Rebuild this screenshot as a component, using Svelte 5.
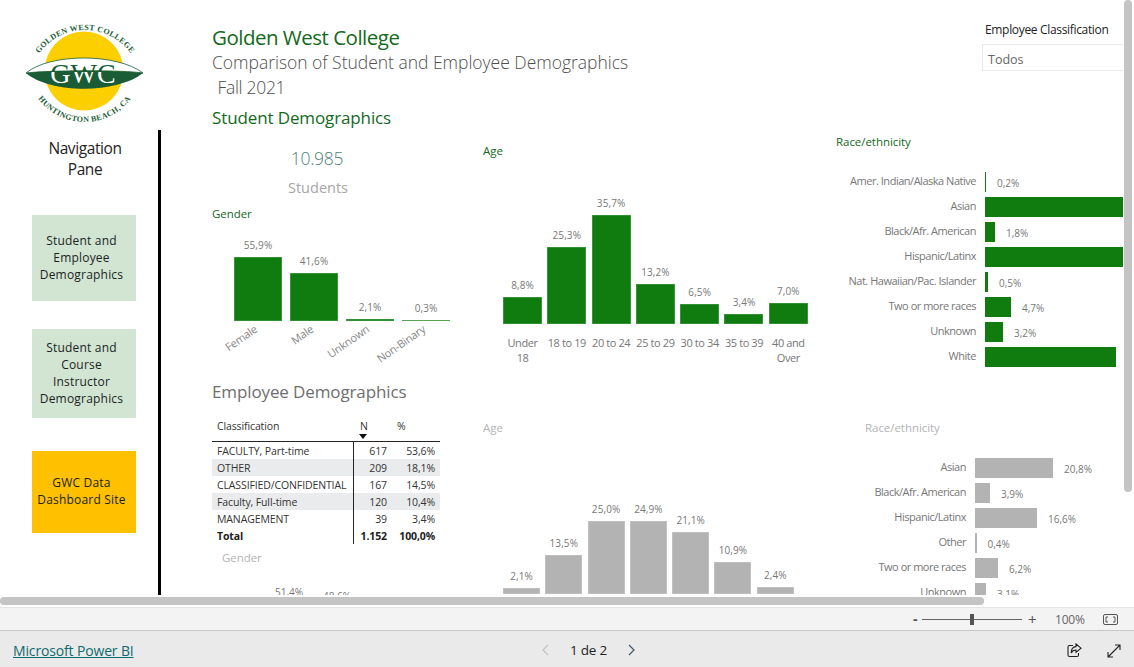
<script>
  const genderS = [
    { l: 'Female', v: 55.9 }, { l: 'Male', v: 41.6 }, { l: 'Unknown', v: 2.1 }, { l: 'Non-Binary', v: 0.3 }
  ];
  const ageS = [
    { l: 'Under 18', v: 8.8 }, { l: '18 to 19', v: 25.3 }, { l: '20 to 24', v: 35.7 }, { l: '25 to 29', v: 13.2 },
    { l: '30 to 34', v: 6.5 }, { l: '35 to 39', v: 3.4 }, { l: '40 and Over', v: 7.0 }
  ];
  const ageE = [2.1, 13.5, 25.0, 24.9, 21.1, 10.9, 2.4];
  const raceS = [
    { l: 'Amer. Indian/Alaska Native', v: 0.2, w: 1 }, { l: 'Asian', v: 26, w: 140, hide: true },
    { l: 'Black/Afr. American', v: 1.8, w: 10 }, { l: 'Hispanic/Latinx', v: 26, w: 140, hide: true },
    { l: 'Nat. Hawaiian/Pac. Islander', v: 0.5, w: 3 }, { l: 'Two or more races', v: 4.7, w: 26 },
    { l: 'Unknown', v: 3.2, w: 18 }, { l: 'White', v: 23.6, w: 131, hide: true }
  ];
  const raceE = [
    { l: 'Asian', v: 20.8, w: 78 }, { l: 'Black/Afr. American', v: 3.9, w: 15 }, { l: 'Hispanic/Latinx', v: 16.6, w: 62 },
    { l: 'Other', v: 0.4, w: 1.5 }, { l: 'Two or more races', v: 6.2, w: 23 }, { l: 'Unknown', v: 3.1, w: 11 }
  ];
  const rows = [
    ['FACULTY, Part-time', '617', '53,6%'], ['OTHER', '209', '18,1%'], ['CLASSIFIED/CONFIDENTIAL', '167', '14,5%'],
    ['Faculty, Full-time', '120', '10,4%'], ['MANAGEMENT', '39', '3,4%']
  ];
  const fmt = (v) => v.toFixed(1).replace('.', ',') + '%';
  const px = (v, s) => Math.max(1, v * s) + 'px';
</script>

<div class="page">
  <div class="viewport">
    <div class="canvas">
      <aside class="nav">
        <div class="logo">
          <svg width="120" height="106" viewBox="0 0 120 106" aria-label="Golden West College logo">
            <defs>
              <linearGradient id="gwcFill" gradientUnits="userSpaceOnUse" x1="0" y1="43" x2="0" y2="63">
                <stop offset="0.45" stop-color="#1a5c35" />
                <stop offset="0.45" stop-color="#ffffff" />
              </linearGradient>
              <path id="arcTop" d="M13 35 A56.7 56.7 0 0 1 107 35" />
              <path id="arcBottom" d="M12 77 A57.6 57.6 0 0 0 107 77" />
            </defs>
            <circle cx="59" cy="51" r="39.5" fill="#fccf00" />
            <text class="arc"><textPath href="#arcTop" startOffset="50%" text-anchor="middle">GOLDEN WEST COLLEGE</textPath></text>
            <text class="arc"><textPath href="#arcBottom" startOffset="50%" text-anchor="middle">HUNTINGTON BEACH, CA</textPath></text>
            <path d="M1 53 C25 33 92 33 118 53 C100 50 25 50 1 53 Z" fill="#fff" stroke="#1a5c35" stroke-width="0.8" />
            <path d="M1 53 C22 50 97 50 118 53 C92 74 25 74 1 53 Z" fill="#1a5c35" />
            <text class="gwc" x="58" y="63" text-anchor="middle" fill="url(#gwcFill)">GWC</text>
          </svg>
        </div>
        <div class="nav-body">
          <div class="pane">Navigation<br />Pane</div>
          <div class="btn b1">Student and<br />Employee<br />Demographics</div>
          <div class="btn b2">Student and<br />Course<br />Instructor<br />Demographics</div>
          <div class="btn b3">GWC Data<br />Dashboard Site</div>
        </div>
      </aside>

      <main class="main">
        <header class="head">
          <div>
            <h1>Golden West College</h1>
            <p class="sub">Comparison of Student and Employee Demographics</p>
            <p class="sub term">Fall 2021</p>
          </div>
          <div class="slicer">
            <div class="slicer-label">Employee Classification</div>
            <div class="slicer-box">Todos</div>
          </div>
        </header>
        <h2 class="green">Student Demographics</h2>

        <div class="row r1">
          <section class="col">
            <div class="kpi">10.985</div>
            <div class="kpi-label">Students</div>
            <div class="title green gender-s">Gender</div>
            <div class="bars gender-bars">
              {#each genderS as d}
                <div class="bar-col gw">
                  <span class="val">{fmt(d.v)}</span>
                  <div class="bar" style:height={px(d.v, 1.145)}></div>
                </div>
              {/each}
            </div>
            <div class="ticks">
              {#each genderS as d}
                <div class="tick"><span>{d.l}</span></div>
              {/each}
            </div>
          </section>

          <section class="col">
            <div class="title green age-t">Age</div>
            <div class="bars age-bars">
              {#each ageS as d}
                <div class="bar-col aw">
                  <span class="val">{fmt(d.v)}</span>
                  <div class="bar" style:height={px(d.v, 3.05)}></div>
                </div>
              {/each}
            </div>
            <div class="age-labels">
              {#each ageS as d}<div>{d.l}</div>{/each}
            </div>
          </section>

          <section class="col">
            <div class="title green race-t">Race/ethnicity</div>
            <div class="hbars">
              {#each raceS as d}
                <div class="hrow">
                  <span class="hlabel">{d.l}</span>
                  <div class="hbar" style:width={d.w + 'px'}></div>
                  {#if !d.hide}<span class="hval">{fmt(d.v)}</span>{/if}
                </div>
              {/each}
            </div>
          </section>
        </div>

        <div class="row r2">
          <section class="col">
            <h2 class="grey">Employee Demographics</h2>
            <table>
              <thead>
                <tr>
                  <th>Classification</th>
                  <th class="n">N<i class="sort"></i></th>
                  <th class="p">%</th>
                </tr>
              </thead>
              <tbody>
                {#each rows as r, i}
                  <tr class:band={i % 2 === 1}><td>{r[0]}</td><td class="num sep">{r[1]}</td><td class="num">{r[2]}</td></tr>
                {/each}
                <tr class="total"><td>Total</td><td class="num sep">1.152</td><td class="num">100,0%</td></tr>
              </tbody>
            </table>
            <div class="title muted gender-e">Gender</div>
            <div class="gender-vals"><span>51,4%</span><span class="lower">48,6%</span></div>
          </section>

          <section class="col">
            <div class="title muted age-te">Age</div>
            <div class="bars age-bars-e">
              {#each ageE as v}
                <div class="bar-col ew">
                  <span class="val">{fmt(v)}</span>
                  <div class="bar grey-bar" style:height={px(v, 2.92)}></div>
                </div>
              {/each}
            </div>
          </section>

          <section class="col">
            <div class="title muted race-te">Race/ethnicity</div>
            <div class="hbars narrow">
              {#each raceE as d}
                <div class="hrow">
                  <span class="hlabel">{d.l}</span>
                  <div class="hbar grey-bar" style:width={d.w + 'px'}></div>
                  <span class="hval">{fmt(d.v)}</span>
                </div>
              {/each}
            </div>
          </section>
        </div>
      </main>
    </div>
    <div class="vscroll"></div>
  </div>

  <div class="hscroll-track"><div class="hscroll"></div></div>

  <div class="zoombar">
    <span class="minus">-</span>
    <div class="slider"><i></i></div>
    <span class="plus">+</span>
    <span class="pct">100%</span>
    <svg class="fit" width="15" height="11" viewBox="0 0 15 11" fill="none" stroke="#555" aria-label="Fit to page">
      <rect x="0.5" y="0.5" width="14" height="10" rx="1.5" />
      <path d="M5 3H3V8H5M10 3H12V8H10" stroke-width="1" />
    </svg>
  </div>

  <footer class="foot">
    <a class="brand" href="#top">Microsoft Power BI</a>
    <div class="pager">
      <svg width="9" height="12" viewBox="0 0 9 12" fill="none" stroke="#c4c4c4" stroke-width="1.2"><path d="M7 1L2 6L7 11" /></svg>
      <span>1 de 2</span>
      <svg width="9" height="12" viewBox="0 0 9 12" fill="none" stroke="#44546a" stroke-width="1.2"><path d="M2 1L7 6L2 11" /></svg>
    </div>
    <div class="foot-icons">
      <svg width="15" height="15" viewBox="0 0 15 15" fill="none" stroke="#222" stroke-width="1.1" aria-label="Share">
        <path d="M6 2.5H2.5A1.5 1.5 0 0 0 1 4V12A1.5 1.5 0 0 0 2.5 13.5H10A1.5 1.5 0 0 0 11.5 12V10" />
        <path d="M9 1L14 5.2L9 9.4V7C6.8 7 5.2 8 4.2 10C4.2 6.5 6 3.8 9 3.6Z" />
      </svg>
      <svg width="14" height="14" viewBox="0 0 14 14" fill="none" stroke="#222" stroke-width="1.1" aria-label="Full screen">
        <path d="M1 13L13 1M8 1H13V6M1 8V13H6" />
      </svg>
    </div>
  </footer>
</div>

<style>
  :global(body) { margin: 0; background: #fff; }
  .page {
    width: 1134px; height: 667px; overflow: hidden; display: flex; flex-direction: column;
    font-family: "Open Sans", "Noto Sans", sans-serif; font-size: 11px; color: #333;
  }
  .viewport { position: relative; height: 595px; overflow: hidden; background: #fff; }
  .canvas { display: flex; height: 595px; }
  h1, h2, p { margin: 0; font-weight: 400; }

  .nav { width: 161px; flex: none; display: flex; flex-direction: column; }
  .logo { height: 130px; box-sizing: border-box; padding: 20px 0 0 25px; }
  .arc { font-family: "Liberation Serif", serif; font-size: 8px; font-weight: 700; fill: #1a5c35; letter-spacing: 0.3px; }
  .gwc { font-family: "Liberation Serif", serif; font-size: 28px; font-weight: 400; stroke: none; }
  .nav-body {
    flex: 1; box-sizing: border-box; border-right: 3px solid #000; padding: 8px 0 0 32px;
    display: flex; flex-direction: column;
  }
  .pane { width: 106px; text-align: center; font-size: 15.5px; line-height: 21px; color: #252423; letter-spacing: -0.4px; }
  .btn {
    width: 104px; box-sizing: border-box; padding: 0 5px 2px 0; display: flex; align-items: center; justify-content: center; text-align: center;
    font-size: 12px; line-height: 17px; color: #201f1e; letter-spacing: 0.2px; white-space: nowrap;
  }
  .b1 { height: 86px; margin-top: 35px; background: #d2e5d3; }
  .b2 { height: 89px; margin-top: 28px; background: #d2e5d3; }
  .b3 { height: 82px; margin-top: 33px; background: #ffc000; }

  .main { flex: 1; box-sizing: border-box; padding: 24px 11px 0 51px; display: flex; flex-direction: column; min-width: 0; }
  .head { display: flex; justify-content: space-between; height: 82px; }
  h1 { font-size: 20.5px; line-height: 26px; color: #14691c; letter-spacing: -0.5px; }
  .sub { font-size: 17.5px; font-weight: 300; line-height: 25px; color: #4f4f4f; letter-spacing: -0.02px; }
  .term { padding-left: 5.5px; letter-spacing: -0.3px; }
  .slicer { width: 141px; }
  .slicer-label { padding-left: 3px; font-size: 12px; line-height: 12px; color: #222; letter-spacing: -0.33px; }
  .slicer-box {
    margin-top: 8px; height: 27px; box-sizing: border-box; border: 1px solid #eaeaea; border-right: 0;
    padding-left: 5px; font-size: 12.5px; line-height: 29px; color: #666;
  }
  h2 { font-size: 17px; line-height: 24px; letter-spacing: -0.12px; }
  .green { color: #14691c; }
  .grey { color: #6e6e6e; }

  .row { display: grid; grid-template-columns: 271px 353px 287px; }
  .r1 { height: 250px; }
  .r2 { height: 215px; }
  .col { min-width: 0; position: relative; }
  .title { font-size: 11.5px; line-height: 16px; letter-spacing: -0.05px; }
  .muted { color: #b3b3b3; }

  .kpi { width: 210px; margin-top: 18px; text-align: center; font-size: 17.5px; font-weight: 300; line-height: 20px; color: #4f7f78; letter-spacing: -0.3px; }
  .kpi-label { width: 212px; margin-top: 10px; text-align: center; font-size: 14.5px; line-height: 20px; color: #a6a6a6; }
  .gender-s { margin-top: 8px; }

  .bars { display: flex; align-items: flex-end; }
  .bar-col { display: flex; flex-direction: column; align-items: center; flex: none; }
  .val { font-size: 10px; line-height: 14px; margin-bottom: 5px; color: #777; white-space: nowrap; letter-spacing: 0.1px; }
  .bar { width: 100%; background: #107c10; box-sizing: border-box; box-shadow: inset 0 0 0 0.6px rgba(255,255,255,.3); }

  .gender-bars { height: 99px; margin-left: 22px; gap: 8px; }
  .gw { width: 48px; }
  .ticks { display: flex; gap: 8px; margin-left: 16px; margin-top: 1px; }
  .tick { width: 24px; padding-right: 24px; display: flex; justify-content: flex-end; }
  .tick span { white-space: nowrap; font-size: 11px; line-height: 14px; color: #888; transform: rotate(-35deg); transform-origin: 100% 0; letter-spacing: -0.2px; }

  .age-t { margin-top: 13px; }
  .age-bars { height: 165px; margin-left: 20px; gap: 5.3px; }
  .aw { width: 39px; }
  .age-labels { display: flex; margin: 11px 0 0 17.4px; }
  .age-labels div { width: 44.3px; text-align: center; font-size: 11px; line-height: 15px; color: #777; letter-spacing: -0.4px; }

  .race-t { margin-top: 4px; }
  .hbars { margin-top: 22px; display: flex; flex-direction: column; gap: 5px; overflow: hidden; }
  .hrow { display: flex; align-items: center; height: 20px; }
  .hlabel { flex: none; width: 140px; margin-right: 9px; text-align: right; font-size: 11px; line-height: 18px; color: #777; white-space: nowrap; letter-spacing: -0.48px; transform: translateY(-1px); }
  .hbar { height: 20px; flex: none; background: #107c10; }
  .hval { margin-left: 11px; font-size: 10px; line-height: 14px; color: #777; transform: translateY(1px); white-space: nowrap; }
  .narrow .hlabel { width: 130px; }
  .race-te { margin: 40px 0 0 29px; }
  .bar.grey-bar, .hbar.grey-bar { background: #b3b3b3; }

  h2.grey { margin: 0; }
  table { margin-top: 13px; width: 228px; border-collapse: collapse; table-layout: fixed; font-size: 10.5px; color: #333; letter-spacing: -0.12px; }
  th { height: 24px; box-sizing: border-box; padding: 2px 0 0 5px; font-weight: 400; text-align: left; vertical-align: top; line-height: 14px; border-bottom: 1px solid #252423; }
  th:first-child { width: 141px; }
  th.n { width: 39px; padding-left: 7px; position: relative; }
  th.p { padding-left: 5px; }
  .sort { position: absolute; left: 6px; top: 17px; border: 4px solid transparent; border-top: 5px solid #111; border-bottom: 0; }
  td { height: 17px; box-sizing: border-box; padding: 1px 0 0 5px; line-height: 16px; white-space: nowrap; }
  .band td { background: #eaebed; }
  .num { text-align: right; padding: 1px 5px 0 0; }
  .sep { border-left: 1px solid #252423; }
  .total td { font-weight: 700; color: #222; }
  .gender-e { margin: 6px 0 0 10px; }
  .gender-vals { display: flex; gap: 20px; margin: 19px 0 0 63px; font-size: 10px; line-height: 14px; color: #777; }
  .lower { margin-top: 4px; }

  .age-te { margin-top: 40px; }
  .age-bars-e { height: 158px; margin-left: 20px; gap: 5.3px; }
  .ew { width: 37px; }

  .vscroll { position: absolute; right: 2px; top: 0; width: 8px; height: 492px; border-radius: 4px; background: #c4c4c4; }
  .hscroll-track { height: 12px; background: #fff; flex: none; }
  .hscroll { margin-top: 2px; width: 984px; height: 8px; border-radius: 4px; background: #c4c4c4; }

  .zoombar {
    flex: none; height: 23px; box-sizing: border-box; border-top: 1px solid #e4e4e4; background: #f3f3f3;
    display: flex; align-items: center; position: relative; padding-left: 913px; color: #555;
  }
  .minus { width: 9px; font-size: 14px; font-weight: 700; line-height: 14px; }
  .slider { width: 100px; height: 1px; background: #666; position: relative; }
  .slider i { position: absolute; left: 48px; top: -5px; width: 4px; height: 11px; background: #555; }
  .plus { margin-left: 6px; width: 12px; font-size: 15px; line-height: 15px; }
  .pct { margin-left: 15px; font-size: 12px; color: #666; letter-spacing: -0.2px; }
  .fit { margin-left: 18px; }

  .foot {
    flex: 1; box-sizing: border-box; border-top: 1px solid #c8c8c8; background: #eaeaea;
    display: flex; align-items: center; position: relative; padding: 3px 0 0 13px;
  }
  .brand { font-size: 14px; color: #0f6a6e; text-decoration: underline; letter-spacing: -0.15px; }
  .pager { position: absolute; left: 541px; top: 12px; display: flex; align-items: center; width: 95px; justify-content: space-between; font-size: 13.5px; font-weight: 500; line-height: 14px; color: #222; letter-spacing: -0.2px; }
  .foot-icons { position: absolute; left: 1067px; top: 12px; display: flex; align-items: center; gap: 25px; }
</style>
